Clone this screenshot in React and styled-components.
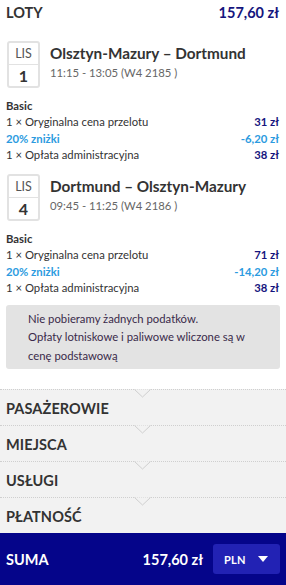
import React from "react";
import styled, { createGlobalStyle } from "styled-components";

const Global = createGlobalStyle`
  html, body { margin: 0; padding: 0; background: #fff; }
  body { font-family: "Source Sans Pro", "Lato", "Open Sans", sans-serif; color: #333; }
  * { box-sizing: border-box; }
`;

const Page = styled.div`
  width: 286px;
  height: 585px;
  display: flex;
  flex-direction: column;
  overflow: hidden;
`;

const Header = styled.div`
  height: 26px;
  padding: 0 7px 0 6px;
  display: flex;
  align-items: center;
  justify-content: space-between;
  font-weight: 700;
  font-size: 14.5px;
`;

const Title = styled.span`
  color: #333;
`;

const Total = styled.span`
  color: #15157e;
`;

const Flight = styled.div`
  display: flex;
  align-items: flex-start;
  gap: 10px;
  padding: 0 6px 0 7px;
  margin-top: ${(p) => p.$top}px;
`;

const DateBox = styled.div`
  width: 33px;
  height: 47px;
  border: 2px solid #e2e2e2;
  border-radius: 3px;
  display: flex;
  flex-direction: column;
`;

const Month = styled.div`
  height: 22px;
  display: flex;
  align-items: center;
  justify-content: center;
  font-size: 12.5px;
  color: #555;
  border-bottom: 1px solid #e2e2e2;
`;

const Day = styled.div`
  flex: 1;
  display: flex;
  align-items: center;
  justify-content: center;
  font-size: 16px;
  font-weight: 700;
  color: #333;
`;

const Info = styled.div`
  display: flex;
  flex-direction: column;
  padding-top: 2px;
`;

const Route = styled.div`
  font-size: 15.3px;
  font-weight: 700;
  color: #333;
  line-height: 20px;
`;

const Times = styled.div`
  font-size: 11.3px;
  color: #666;
  line-height: 20px;
`;

const Fare = styled.div`
  padding: 0 7px 0 6px;
  margin-top: 10px;
  display: flex;
  flex-direction: column;
`;

const FareName = styled.div`
  font-size: 11.3px;
  font-weight: 700;
  line-height: 16.5px;
  color: #333;
`;

const Line = styled.div`
  display: flex;
  justify-content: space-between;
  font-size: 11.3px;
  line-height: 16.5px;
  color: ${(p) => (p.$discount ? "#2c9be0" : "#333")};
  font-weight: ${(p) => (p.$discount ? 700 : 400)};
`;

const Amount = styled.span`
  font-weight: 700;
  color: ${(p) => (p.$discount ? "#2c9be0" : "#15157e")};
`;

const Note = styled.div`
  margin: 8px 6px 0 6px;
  background: #e3e3e3;
  border-radius: 3px;
  padding: 5px 34px 4px 22px;
  font-size: 11.3px;
  line-height: 18.5px;
  color: #3a2a4a;
`;

const Accordion = styled.div`
  margin-top: 20px;
  background: #f2f2f2;
  display: flex;
  flex-direction: column;
  flex: 1;
`;

const Section = styled.div`
  position: relative;
  height: 36px;
  display: flex;
  align-items: center;
  padding: 2px 6px 0;
  border-top: 1px dotted #cfcfcf;
  font-size: 14.5px;
  font-weight: 700;
  color: #333;
  letter-spacing: 0.1px;
`;

const Chevron = styled.svg`
  position: absolute;
  top: -1px;
  left: 134px;
`;

const Footer = styled.div`
  height: 53px;
  background: #05058a;
  display: flex;
  align-items: center;
  padding: 0 6px;
  color: #fff;
  font-weight: 700;
  font-size: 14.5px;
`;

const SumLabel = styled.span`
  flex: 1;
`;

const SumValue = styled.span`
  margin-right: 10px;
`;

const CurrencyButton = styled.div`
  width: 67px;
  height: 30px;
  background: #2222b4;
  border-radius: 3px;
  display: flex;
  align-items: center;
  justify-content: space-between;
  padding: 0 12px 0 11px;
  font-size: 11px;
  letter-spacing: 0.3px;
`;

const flights = [
  {
    month: "LIS",
    day: "1",
    route: "Olsztyn-Mazury – Dortmund",
    times: "11:15 - 13:05 (W4 2185 )",
    base: "31 zł",
    discount: "-6,20 zł",
    top: 15,
  },
  {
    month: "LIS",
    day: "4",
    route: "Dortmund – Olsztyn-Mazury",
    times: "09:45 - 11:25 (W4 2186 )",
    base: "71 zł",
    discount: "-14,20 zł",
    top: 10,
  },
];

const sections = ["PASAŻEROWIE", "MIEJSCA", "USŁUGI", "PŁATNOŚĆ"];

export default function App() {
  return (
    <Page>
      <Global />
      <Header>
        <Title>LOTY</Title>
        <Total>157,60 zł</Total>
      </Header>
      {flights.map((f) => (
        <React.Fragment key={f.day}>
          <Flight $top={f.top}>
            <DateBox>
              <Month>{f.month}</Month>
              <Day>{f.day}</Day>
            </DateBox>
            <Info>
              <Route>{f.route}</Route>
              <Times>{f.times}</Times>
            </Info>
          </Flight>
          <Fare>
            <FareName>Basic</FareName>
            <Line>
              <span>1 × Oryginalna cena przelotu</span>
              <Amount>{f.base}</Amount>
            </Line>
            <Line $discount>
              <span>20% zniżki</span>
              <Amount $discount>{f.discount}</Amount>
            </Line>
            <Line>
              <span>1 × Opłata administracyjna</span>
              <Amount>38 zł</Amount>
            </Line>
          </Fare>
        </React.Fragment>
      ))}
      <Note>
        Nie pobieramy żadnych podatków.
        <br />
        Opłaty lotniskowe i paliwowe wliczone są w cenę podstawową
      </Note>
      <Accordion>
        {sections.map((s) => (
          <Section key={s}>
            <Chevron width="17" height="9" viewBox="0 0 17 9">
              <polyline points="0.5,0.5 8.5,8 16.5,0.5" fill="#f2f2f2" stroke="#cfcfcf" strokeWidth="1" />
            </Chevron>
            {s}
          </Section>
        ))}
      </Accordion>
      <Footer>
        <SumLabel>SUMA</SumLabel>
        <SumValue>157,60 zł</SumValue>
        <CurrencyButton>
          <span>PLN</span>
          <svg width="10" height="6" viewBox="0 0 10 6">
            <polygon points="0,0 10,0 5,6" fill="#fff" />
          </svg>
        </CurrencyButton>
      </Footer>
    </Page>
  );
}
